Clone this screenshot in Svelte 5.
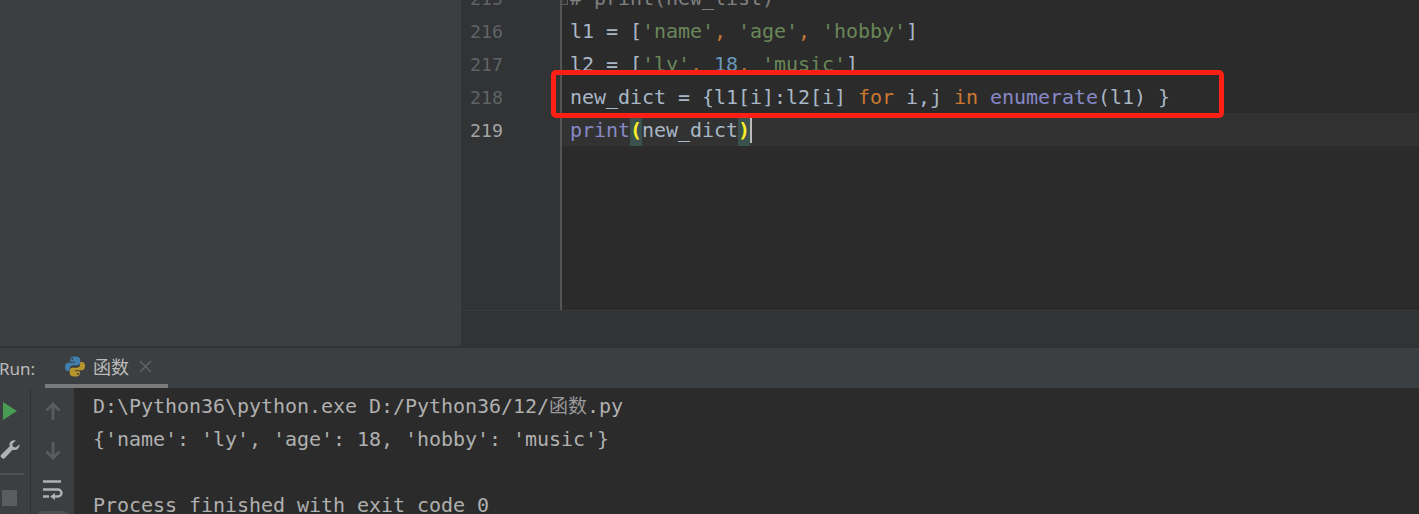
<script>
  let lines = [
    { no: 215, parts: [["cm", "# print(new_list)"]] },
    { no: 216, parts: [["v", "l1 = ["], ["s", "'name'"], ["k", ","], ["s", " 'age'"], ["k", ","], ["s", " 'hobby'"], ["v", "]"]] },
    { no: 217, parts: [["v", "l2 = ["], ["s", "'ly'"], ["k", ","], ["n", " 18"], ["k", ","], ["s", " 'music'"], ["v", "]"]] },
    { no: 218, parts: [["v", "new_dict = {l1[i]:l2[i] "], ["k", "for"], ["v", " i,j "], ["k", "in"], ["b", " enumerate"], ["v", "(l1) }"]] },
    { no: 219, current: true, parts: [["b", "print"], ["p", "("], ["v", "new_dict"], ["p", ")"]] },
  ];
</script>

<div class="ide">
  <div class="top">
    <div class="project"></div>
    <div class="gutter">
      <div class="nums">
        {#each lines as line}
          <div class="num" class:cur={line.current}>{line.no}</div>
        {/each}
      </div>
    </div>
    <div class="editor">
      <div class="fold"></div>
      <div class="code">
        {#each lines as line}
          <div class="row" class:current={line.current}>
            {#each line.parts as part}<span class={part[0]}>{part[1]}</span>{/each}{#if line.current}<span class="caret"></span>{/if}
          </div>
        {/each}
      </div>
    </div>
    <div class="highlight"></div>
  </div>
  <div class="crumbs"></div>

  <div class="run">
    <div class="tabs">
      <span class="label">Run:</span>
      <div class="tab">
        <svg width="20" height="21" viewBox="0 0 20 21">
          <path fill="#3f7fae" d="M9.8 0.5c-4 0-4.6 1.500-4.6 3v2.300h5v1h-7c-2 0-3.200 1.600-3.200 4.200s1.200 4 3 4h1.800v-2.500c0-1.800 1.400-3.300 3.300-3.300h4.400c1.500 0 2.700-1.200 2.700-2.700v-3c0-1.500-1.500-3-5.400-3zM7.200 2a1 1 0 1 1 0 2 1 1 0 0 1 0-2z"/>
          <path fill="#b8962e" d="M10.200 20.500c4 0 4.600-1.500 4.600-3v-2.300h-5v-1h7c2 0 3.200-1.600 3.200-4.200s-1.200-4-3-4h-1.800v2.500c0 1.800-1.400 3.300-3.300 3.300h-4.400c-1.500 0-2.700 1.200-2.700 2.700v3c0 1.500 1.500 3 5.400 3zM12.800 19a1 1 0 1 1 0-2 1 1 0 0 1 0 2z"/>
        </svg>
        <span class="tabname">函数</span>
        <svg class="close" width="13" height="13" viewBox="0 0 13 13"><path d="M1 1l11 11M12 1L1 12" stroke="#5f6264" stroke-width="1.600" fill="none"/></svg>
      </div>
    </div>
    <div class="body">
      <div class="bar1">
        <svg class="play" width="18" height="18" viewBox="0 0 18 18"><path d="M1 0l14 9-14 9z" fill="#499c54"/></svg>
        <svg class="wrench" width="21" height="21" viewBox="0 0 22 22"><path d="M20.500 5.500l-4 3.500-3-.8-.7-3 3.700-3.700c-2.600-.8-5.400.4-6.300 2.800-.4 1.100-.4 2.200 0 3.300L1.200 16.400c-.8.800-.8 2 0 2.800l1 1c.8.700 2 .7 2.700 0l8.300-8.900c2.500.8 5.200-.2 6.600-2.500.6-1 .8-2.400.7-3.300z" fill="#afb1b3"/></svg>
        <div class="sep"></div>
        <div class="stop"></div>
      </div>
      <div class="bar2">
        <svg class="up" width="16" height="18" viewBox="0 0 16 18"><path d="M8 18V2M1.500 8.500L8 2l6.500 6.500" stroke="#5a5d5f" stroke-width="2.800" fill="none"/></svg>
        <svg class="down" width="16" height="18" viewBox="0 0 16 18"><path d="M8 0v16M1.500 9.500L8 16l6.500-6.500" stroke="#5a5d5f" stroke-width="2.800" fill="none"/></svg>
        <svg class="wrap" width="20" height="20" viewBox="0 0 20 20">
          <path d="M0 1.500h18M0 9.500h15a3.500 3.500 0 0 1 0 7h-4M0 16.500h6" stroke="#afb1b3" stroke-width="2.400" fill="none"/>
          <path d="M12 13l-5 3.500 5 3.500z" fill="#afb1b3"/>
        </svg>
        <div class="pill"></div>
      </div>
      <div class="console">
        <div class="out">D:\Python36\python.exe D:/Python36/12/<span class="cjk">函数</span>.py</div>
        <div class="out">{"{'name': 'ly', 'age': 18, 'hobby': 'music'}"}</div>
        <div class="out"></div>
        <div class="out">Process finished with exit code 0</div>
      </div>
    </div>
  </div>
</div>

<style>
  :global(body) {
    margin: 0;
    background: #3c3f41;
    overflow: hidden;
  }

  .ide {
    width: 1419px;
    height: 514px;
    display: flex;
    flex-direction: column;
    overflow: hidden;
    font-family: "DejaVu Sans Mono", "Noto Sans CJK SC", monospace;
    font-size: 20px;
    letter-spacing: -0.04px;
  }

  .top {
    position: relative;
    height: 310px;
    display: flex;
    flex: none;
  }

  .project {
    width: 461px;
    background: #3c3f41;
    flex: none;
  }

  .gutter {
    width: 99px;
    flex: none;
    background: #313335;
    overflow: hidden;
  }

  .nums {
    margin-top: -19px;
    padding-left: 9px;
    font-size: 18.300px;
    color: #606366;
  }

  .num {
    height: 33px;
    line-height: 35px;
  }

  .num.cur {
    color: #a4a3a3;
  }

  .editor {
    flex: 1;
    position: relative;
    background: #2b2b2b;
    border-left: 2px solid #555555;
    overflow: hidden;
  }

  .fold {
    position: absolute;
    left: -8px;
    top: -9px;
    width: 12px;
    height: 12px;
    border: 1px solid #5a5d5f;
    background: #313335;
  }

  .code {
    margin-top: -19px;
    color: #a9b7c6;
  }

  .row {
    height: 33px;
    line-height: 35px;
    padding-left: 8px;
    white-space: pre;
    display: flex;
  }

  .row.current {
    background: #323232;
  }

  .cm { color: #808080; }
  .v { color: #a9b7c6; }
  .s { color: #6a8759; }
  .k { color: #cc7832; }
  .n { color: #6897bb; }
  .b { color: #8888c6; }
  .p {
    color: #ffef28;
    background: #3b514d;
    font-weight: bold;
  }

  .caret {
    width: 2px;
    height: 25px;
    margin-top: 5px;
    background: #bbbbbb;
  }

  .highlight {
    position: absolute;
    left: 551px;
    top: 70px;
    width: 663px;
    height: 38px;
    border: 5px solid #ff1f14;
    border-radius: 5px;
  }

  .crumbs {
    height: 36px;
    flex: none;
    margin-left: 461px;
    background: #313335;
    border-top: 1px solid #3a3a3a;
    box-sizing: border-box;
  }

  .run {
    flex: 1;
    display: flex;
    flex-direction: column;
    border-top: 2px solid #323232;
    min-height: 0;
  }

  .tabs {
    height: 40px;
    flex: none;
    box-sizing: border-box;
    display: flex;
    align-items: center;
    background: #3c3f41;
  }

  .label {
    width: 45px;
    margin-left: -1px;
    flex: none;
    font-family: "Noto Sans", sans-serif;
    font-size: 17px;
    color: #bbbbbb;
  }

  .tab {
    margin-left: 1px;
    width: 123px;
    height: 40px;
    box-sizing: border-box;
    border-bottom: 4px solid #787a7c;
    padding-left: 20px;
    display: flex;
    align-items: center;
    gap: 8px;
  }

  .tabname {
    font-family: "Noto Sans CJK SC", sans-serif;
    font-size: 18px;
    color: #bbbbbb;
    letter-spacing: 0;
  }

  .close {
    margin-left: 2px;
  }

  .body {
    flex: 1;
    display: flex;
    min-height: 0;
    overflow: hidden;
  }

  .body svg {
    flex: none;
    display: block;
  }

  .bar1 {
    width: 30px;
    flex: none;
    border-right: 1px solid #323232;
    display: flex;
    flex-direction: column;
    align-items: flex-start;
    padding-top: 14px;
  }

  .play {
    margin-left: 2px;
  }

  .wrench {
    margin-top: 19px;
  }

  .sep {
    flex: none;
    width: 24px;
    height: 2px;
    background: #4e5254;
    margin-top: 13px;
  }

  .stop {
    flex: none;
    width: 15px;
    height: 16px;
    background: #5a5d5f;
    margin-top: 15px;
    margin-left: 2px;
  }

  .bar2 {
    width: 43px;
    flex: none;
    display: flex;
    flex-direction: column;
    align-items: center;
    padding-top: 14px;
  }

  .down {
    margin-top: 22px;
  }

  .wrap {
    margin-top: 20px;
    margin-left: 1px;
  }

  .pill {
    width: 32px;
    height: 12px;
    flex: none;
    margin-top: 11px;
    border-radius: 6px;
    background: #4c5052;
  }

  .console {
    flex: 1;
    background: #2b2b2b;
    padding: 2px 0 0 19px;
    color: #b0b0b0;
  }

  .out {
    height: 33px;
    line-height: 33px;
    white-space: pre;
  }

  .cjk {
    font-family: "Noto Sans CJK SC", serif;
    font-size: 19px;
    line-height: 1;
    letter-spacing: 0;
    color: #999999;
  }
</style>
